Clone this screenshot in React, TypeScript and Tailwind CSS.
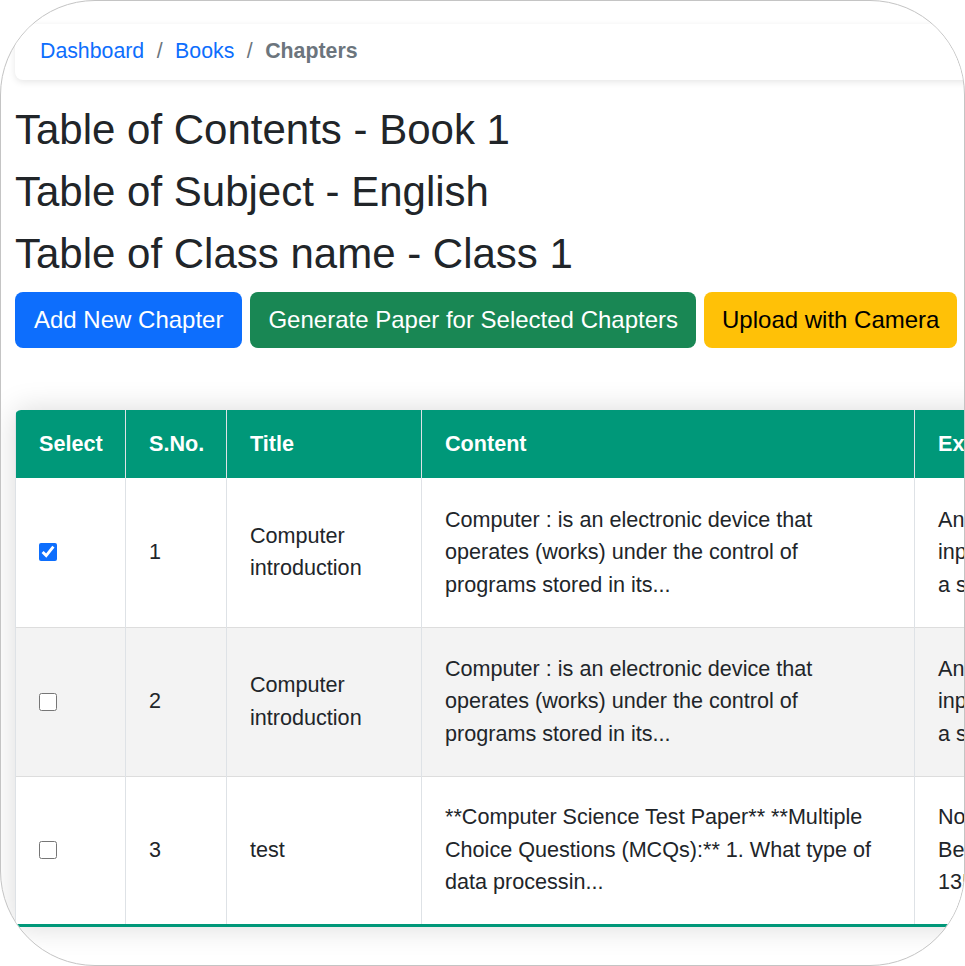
import { Fragment } from "react";

const rows = [
  {
    id: 1,
    checked: true,
    title: "Computer introduction",
    content: "Computer : is an electronic device that operates (works) under the control of programs stored in its...",
    explanation: ["An electronic device that accepts", "input data, processes it and gives", "a suitable output..."],
  },
  {
    id: 2,
    checked: false,
    title: "Computer introduction",
    content: "Computer : is an electronic device that operates (works) under the control of programs stored in its...",
    explanation: ["An electronic device that accepts", "input data, processes it and gives", "a suitable output..."],
  },
  {
    id: 3,
    checked: false,
    title: "test",
    content: "**Computer Science Test Paper** **Multiple Choice Questions (MCQs):** 1. What type of data processin...",
    explanation: ["Note: answer all of the questions.", "Be sure to read each question", "135 minutes are allowed..."],
  },
];

const cols = [
  { label: "Select", w: "w-[110px]" },
  { label: "S.No.", w: "w-[101px]" },
  { label: "Title", w: "w-[195px]" },
  { label: "Content", w: "w-[493px]" },
  { label: "Explanation", w: "w-[400px]" },
];

export default function App() {
  return (
    <div className="w-[965px] h-[966px] bg-white [font-family:'Liberation_Sans',Arial,sans-serif] text-[#212529]">
      <div className="w-[965px] h-[966px] rounded-[95px] border border-[#c4c4c4] overflow-hidden bg-white">
        <div className="w-[1400px] pl-[14px] pt-[23px]">
          {/* Breadcrumb */}
          <nav className="w-[1000px] h-[56px] flex items-center px-[25px] rounded-[8px] bg-white shadow-[0_2px_7px_rgba(0,0,0,0.1)] text-[21.3px]">
            <a className="text-[#0d6efd]">Dashboard</a>
            <span className="px-[12.5px] text-[#6c757d]">/</span>
            <a className="text-[#0d6efd]">Books</a>
            <span className="px-[12.5px] text-[#6c757d]">/</span>
            <span className="font-bold text-[#6c757d]">Chapters</span>
          </nav>

          {/* Headings */}
          <div className="mt-[19px] text-[42px] leading-[62px]">
            <h2>Table of Contents - Book 1</h2>
            <h2>Table of Subject - English</h2>
            <h2>Table of Class name - Class 1</h2>
          </div>

          {/* Actions */}
          <div className="mt-[7px] flex gap-[8px] text-[24px]">
            <button className="h-[56px] px-[19px] rounded-[8px] bg-[#0d6efd] text-white">Add New Chapter</button>
            <button className="h-[56px] px-[18px] rounded-[8px] bg-[#198754] text-white">
              Generate Paper for Selected Chapters
            </button>
            <button className="h-[56px] px-[18px] rounded-[8px] bg-[#ffc107] text-black">Upload with Camera</button>
          </div>

          {/* Table */}
          <table className="mt-[62px] table-fixed border-collapse w-[1299px] text-[21.6px] rounded-t-[6px] overflow-hidden shadow-[0_0_30px_rgba(0,0,0,0.15)]">
            <thead>
              <tr className="bg-[#009879] text-white text-left">
                {cols.map((c) => (
                  <th key={c.label} className={`${c.w} h-[68px] px-[23px] font-bold border-x border-[#dee2e6]`}>
                    {c.label}
                  </th>
                ))}
              </tr>
            </thead>
            <tbody>
              {rows.map((r, i) => (
                <Fragment key={r.id}>
                  <tr
                    className={`${i % 2 === 1 ? "bg-[#f3f3f3]" : "bg-white"} ${
                      i === rows.length - 1 ? "border-b-[3px] border-b-[#009879]" : "border-b border-b-[#dddddd]"
                    } leading-[32.5px]`}
                  >
                    <td className="h-[149px] px-[23px] border-x border-[#dee2e6]">
                      <input type="checkbox" defaultChecked={r.checked} className="block w-[18px] h-[18px] accent-[#0d6efd]" />
                    </td>
                    <td className="px-[23px] border-x border-[#dee2e6]">{r.id}</td>
                    <td className="px-[23px] border-x border-[#dee2e6]">{r.title}</td>
                    <td className="px-[23px] border-x border-[#dee2e6]">
                      <div className="w-[440px]">{r.content}</div>
                    </td>
                    <td className="px-[23px] border-x border-[#dee2e6]">
                      {r.explanation.map((line) => (
                        <div key={line} className="whitespace-nowrap">
                          {line}
                        </div>
                      ))}
                    </td>
                  </tr>
                </Fragment>
              ))}
            </tbody>
          </table>
        </div>
      </div>
    </div>
  );
}
